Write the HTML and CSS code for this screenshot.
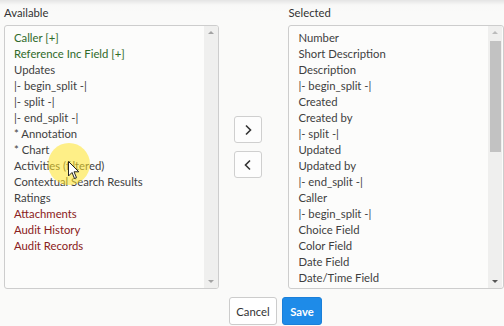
FILE: index.html
```html
<!DOCTYPE html>
<html>
<head>
<meta charset="utf-8">
<link rel="stylesheet" href="styles.css">
</head>
<body>
<div class="page">
  <div class="cols">
    <div class="col">
      <div class="label">Available</div>
      <div class="box">
        <ul class="list">
          <li class="ref">Caller [+]</li>
          <li class="ref">Reference Inc Field [+]</li>
          <li>Updates</li>
          <li>|- begin_split -|</li>
          <li>|- split -|</li>
          <li>|- end_split -|</li>
          <li>* Annotation</li>
          <li>* Chart</li>
          <li>Activities (filtered)</li>
          <li>Contextual Search Results</li>
          <li>Ratings</li>
          <li class="rel">Attachments</li>
          <li class="rel">Audit History</li>
          <li class="rel">Audit Records</li>
        </ul>
        <div class="sbar">
          <span class="arr up"></span>
          <span class="track"></span>
          <span class="arr down"></span>
        </div>
      </div>
    </div>
    <div class="mid">
      <button class="mv" type="button"><svg width="10" height="12" viewBox="0 0 10 12"><polyline points="3,1.5 7.5,6 3,10.5" fill="none" stroke="#333" stroke-width="1.6"/></svg></button>
      <button class="mv" type="button"><svg width="10" height="12" viewBox="0 0 10 12"><polyline points="7,1.5 2.5,6 7,10.5" fill="none" stroke="#333" stroke-width="1.6"/></svg></button>
    </div>
    <div class="col right">
      <div class="label">Selected</div>
      <div class="box">
        <ul class="list">
          <li>Number</li>
          <li>Short Description</li>
          <li>Description</li>
          <li>|- begin_split -|</li>
          <li>Created</li>
          <li>Created by</li>
          <li>|- split -|</li>
          <li>Updated</li>
          <li>Updated by</li>
          <li>|- end_split -|</li>
          <li>Caller</li>
          <li>|- begin_split -|</li>
          <li>Choice Field</li>
          <li>Color Field</li>
          <li>Date Field</li>
          <li>Date/Time Field</li>
        </ul>
        <div class="sbar">
          <span class="arr up"></span>
          <span class="track"><span class="thumb"></span></span>
          <span class="arr down"></span>
        </div>
      </div>
    </div>
  </div>
  <div class="foot">
    <button class="btn cancel" type="button">Cancel</button>
    <button class="btn save" type="button">Save</button>
  </div>
</div>
<div class="spot"></div>
<svg class="cursor" width="12" height="19" viewBox="0 0 12 19"><path d="M0.5,0.5 L0.5,15 L4,11.5 L6.5,17.5 L8.5,16.6 L6,10.8 L10.8,10.8 Z" fill="#fff" stroke="#222" stroke-width="1"/></svg>
</body>
</html>
```

FILE: styles.css
```css
html, body {
  margin: 0;
  padding: 0;
}
body {
  width: 504px;
  height: 326px;
  overflow: hidden;
  background: linear-gradient(#e4e4e4 0, #f8f8f7 5px, #fafaf9 12px);
  font-family: "Lato", "Open Sans", sans-serif;
  font-size: 11.3px;
  color: #3f3f3f;
  position: relative;
}
.page {
  padding: 4px 0 0 4px;
}
.cols {
  display: flex;
}
.col {
  width: 215px;
  display: flex;
  flex-direction: column;
}
.col.right {
  width: 216px;
}
.label {
  height: 17px;
  line-height: 17px;
  margin-bottom: 4px;
  color: #333;
}
.box {
  box-sizing: border-box;
  height: 264px;
  border: 1px solid #cdcdcd;
  border-radius: 3px;
  background: #fcfcfb;
  display: flex;
  overflow: hidden;
}
.list {
  list-style: none;
  margin: 0;
  padding: 4px 0 0 9px;
  flex: 1;
  overflow: hidden;
}
.list li {
  height: 16px;
  line-height: 16px;
  white-space: nowrap;
}
.list .ref { color: #2f6a2a; }
.list .rel { color: #8a2020; }
.sbar {
  width: 14px;
  background: #efefee;
  display: flex;
  flex-direction: column;
  align-items: center;
}
.right .sbar {
  margin-right: 1px;
}
.arr {
  height: 14px;
  width: 14px;
  position: relative;
}
.arr::after {
  content: "";
  position: absolute;
  left: 4px;
  border-left: 3px solid transparent;
  border-right: 3px solid transparent;
}
.arr.up::after {
  top: 5px;
  border-bottom: 3px solid #a3a3a3;
}
.arr.down::after {
  top: 6px;
  border-top: 3px solid #a3a3a3;
}
.right .arr.down::after {
  border-top-color: #555;
}
.right .arr.up::after {
  border-bottom-color: #bbb;
}
.track {
  flex: 1;
  width: 100%;
  display: flex;
  flex-direction: column;
  align-items: center;
}
.thumb {
  width: 11px;
  height: 111px;
  background: #c2c2c2;
  margin-top: 1px;
}
.mid {
  width: 70px;
  padding: 112px 0 0 15px;
  box-sizing: border-box;
  display: flex;
  flex-direction: column;
  gap: 8px;
}
.mv {
  width: 28px;
  height: 27px;
  padding: 0;
  border: 1px solid #cfcfcf;
  border-radius: 3px;
  background: #fdfdfd;
  display: flex;
  align-items: center;
  justify-content: center;
}
.foot {
  display: flex;
  gap: 5px;
  padding: 8px 0 0 225px;
}
.btn {
  height: 28px;
  padding: 0;
  border-radius: 3px;
  font-family: "Lato", "Open Sans", sans-serif;
  font-size: 11.3px;
  text-align: center;
}
.cancel {
  width: 48px;
  border: 1px solid #cccccc;
  background: #fff;
  color: #333;
}
.save {
  width: 40px;
  border: 1px solid #1a7fd9;
  background: #1e8be8;
  color: #fff;
  font-weight: 700;
}
.spot {
  position: absolute;
  left: 48px;
  top: 143px;
  width: 42px;
  height: 42px;
  border-radius: 50%;
  background: rgba(255, 228, 40, 0.55);
}
.cursor {
  position: absolute;
  left: 68px;
  top: 161px;
}
```
